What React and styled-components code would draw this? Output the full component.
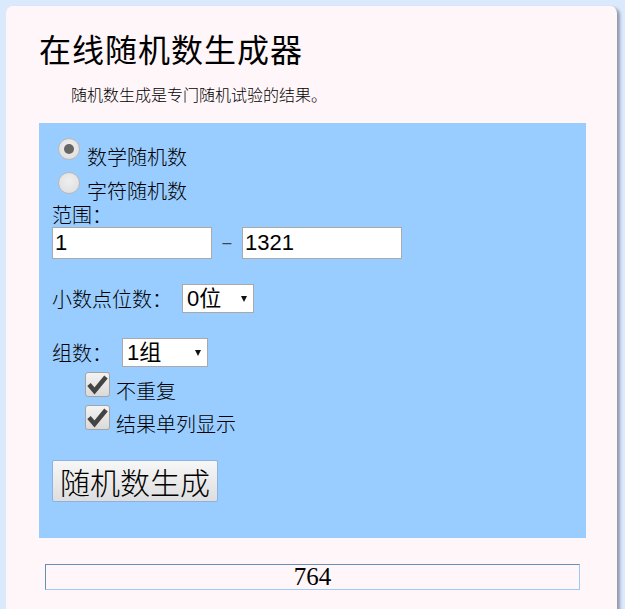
import styled, { createGlobalStyle } from 'styled-components';

const GlobalStyle = createGlobalStyle`
  html, body {
    margin: 0;
    padding: 0;
    background: #dbe9fd;
  }
  body {
    font-family: 'Noto Sans CJK SC', 'Liberation Sans', sans-serif;
    color: #000;
  }
`;

const Page = styled.div`
  padding: 6px 8px 0 6px;
  height: 609px;
  box-sizing: border-box;
  overflow: hidden;
`;

const Card = styled.div`
  background: #fff6f9;
  border-radius: 7px 7px 0 0;
  box-shadow: 3px 2px 3px rgba(90, 90, 110, 0.55);
  padding: 22px 31px 30px 33px;
  min-height: 640px;
  box-sizing: border-box;
`;

const Title = styled.h1`
  margin: 0;
  font-size: 32px;
  line-height: 40px;
  font-weight: 400;
  letter-spacing: 1px;
`;

const Intro = styled.p`
  margin: 16px 0 0;
  font-size: 16px;
  line-height: 20px;
  text-indent: 2em;
  font-weight: 300;
`;

const Panel = styled.div`
  margin-top: 19px;
  background: #99ccff;
  padding: 9px 0 36px 13px;
`;

const ChoiceRow = styled.label`
  display: flex;
  align-items: flex-start;
  height: ${(p) => p.h}px;
  padding-left: ${(p) => p.indent || 0}px;
`;

const RadioDot = styled.span`
  width: 22px;
  height: 22px;
  margin: 6px 7px 0 6px;
  border-radius: 50%;
  box-sizing: border-box;
  border: 1px solid #b9b9b9;
  background: radial-gradient(circle at 50% 40%, #efefef 0%, #dcdcdc 100%);
  display: flex;
  align-items: center;
  justify-content: center;
  flex-shrink: 0;

  &::after {
    content: '';
    width: 10px;
    height: 10px;
    border-radius: 50%;
    background: ${(p) => (p.checked ? '#666' : 'transparent')};
  }
`;

const ChoiceText = styled.span`
  font-size: 20px;
  line-height: 24px;
  margin-top: ${(p) => p.top}px;
  font-weight: 300;
`;

const CheckBox = styled.span`
  width: 25px;
  height: 25px;
  margin-right: 6px;
  border-radius: 3px;
  box-sizing: border-box;
  border: 1px solid #a3a3a3;
  background: linear-gradient(#f3f3f3, #dadada);
  display: flex;
  align-items: center;
  justify-content: center;
  flex-shrink: 0;
`;

const FieldLabel = styled.div`
  font-size: 20px;
  line-height: 24px;
  margin-top: 3px;
  font-weight: 300;
`;

const RangeRow = styled.div`
  display: flex;
  align-items: center;
`;

const NumInput = styled.input`
  width: 160px;
  height: 32px;
  box-sizing: border-box;
  border: 1px solid #aaa;
  background: #fff;
  padding: 0 2px;
  font-family: 'Liberation Sans', Arial, sans-serif;
  font-size: 22px;
  color: #000;
  outline: none;
`;

const Dash = styled.span`
  width: 30px;
  text-align: center;
  font-size: 16px;
  font-family: 'Liberation Sans', sans-serif;
  color: #444;
`;

const SelectRow = styled.div`
  display: flex;
  align-items: center;
  margin-top: 25px;
`;

const SelectLabel = styled.span`
  font-size: 20px;
  line-height: 24px;
  margin-right: 10px;
  font-weight: 300;
`;

const SelectWrap = styled.div`
  position: relative;
  width: ${(p) => p.w}px;
  height: 29px;
`;

const Select = styled.select`
  appearance: none;
  width: 100%;
  height: 100%;
  box-sizing: border-box;
  border: 1px solid #a9a9a9;
  border-radius: 0;
  background: #fff;
  padding: 0 0 0 4px;
  font-family: 'Liberation Sans', 'Noto Sans CJK SC', sans-serif;
  font-size: 22px;
  color: #000;
  outline: none;
`;

const Arrow = styled.span`
  position: absolute;
  right: 7px;
  top: 12px;
  width: 0;
  height: 0;
  border-left: 3.5px solid transparent;
  border-right: 3.5px solid transparent;
  border-top: 6px solid #111;
  pointer-events: none;
`;

const CheckList = styled.div`
  margin-top: 5px;
`;

const GenerateButton = styled.button`
  margin-top: 22px;
  height: 42px;
  padding: 0 7px;
  border: 1px solid #8db2e2;
  border-radius: 2px;
  background: linear-gradient(#f7f7f7, #dedede);
  font-family: 'Noto Sans CJK SC', sans-serif;
  font-size: 30px;
  line-height: 40px;
  font-weight: 300;
  color: #000;
  cursor: pointer;
`;

const Result = styled.div`
  margin: 26px 6px 0;
  height: 26px;
  box-sizing: border-box;
  border: 1px solid #9ec8f6;
  border-top-color: #6a8db4;
  border-left-color: #6a8db4;
  text-align: center;
  font-family: 'Liberation Serif', serif;
  font-size: 25px;
  line-height: 24px;
`;

const CheckMark = () => (
  <svg width="21" height="21" viewBox="0 0 21 21">
    <path d="M2 10.5 L7.5 17 L19 3" fill="none" stroke="#444" strokeWidth="4.5" />
  </svg>
);

export default function App() {
  return (
    <>
      <GlobalStyle />
      <Page>
        <Card>
          <Title>在线随机数生成器</Title>
          <Intro>随机数生成是专门随机试验的结果。</Intro>
          <Panel>
            <ChoiceRow h={34}>
              <RadioDot checked />
              <ChoiceText top={13}>数学随机数</ChoiceText>
            </ChoiceRow>
            <ChoiceRow h={34}>
              <RadioDot />
              <ChoiceText top={13}>字符随机数</ChoiceText>
            </ChoiceRow>
            <FieldLabel>范围：</FieldLabel>
            <RangeRow>
              <NumInput defaultValue="1" />
              <Dash>–</Dash>
              <NumInput defaultValue="1321" />
            </RangeRow>
            <SelectRow>
              <SelectLabel>小数点位数：</SelectLabel>
              <SelectWrap w={72}>
                <Select defaultValue="0">
                  <option value="0">0位</option>
                  <option value="1">1位</option>
                  <option value="2">2位</option>
                </Select>
                <Arrow />
              </SelectWrap>
            </SelectRow>
            <SelectRow>
              <SelectLabel>组数：</SelectLabel>
              <SelectWrap w={86}>
                <Select defaultValue="1">
                  <option value="1">1组</option>
                  <option value="5">5组</option>
                  <option value="10">10组</option>
                </Select>
                <Arrow />
              </SelectWrap>
            </SelectRow>
            <CheckList>
              <ChoiceRow h={33} indent={33}>
                <CheckBox>
                  <CheckMark />
                </CheckBox>
                <ChoiceText top={7}>不重复</ChoiceText>
              </ChoiceRow>
              <ChoiceRow h={33} indent={33}>
                <CheckBox>
                  <CheckMark />
                </CheckBox>
                <ChoiceText top={7}>结果单列显示</ChoiceText>
              </ChoiceRow>
            </CheckList>
            <GenerateButton>随机数生成</GenerateButton>
          </Panel>
          <Result>764</Result>
        </Card>
      </Page>
    </>
  );
}
